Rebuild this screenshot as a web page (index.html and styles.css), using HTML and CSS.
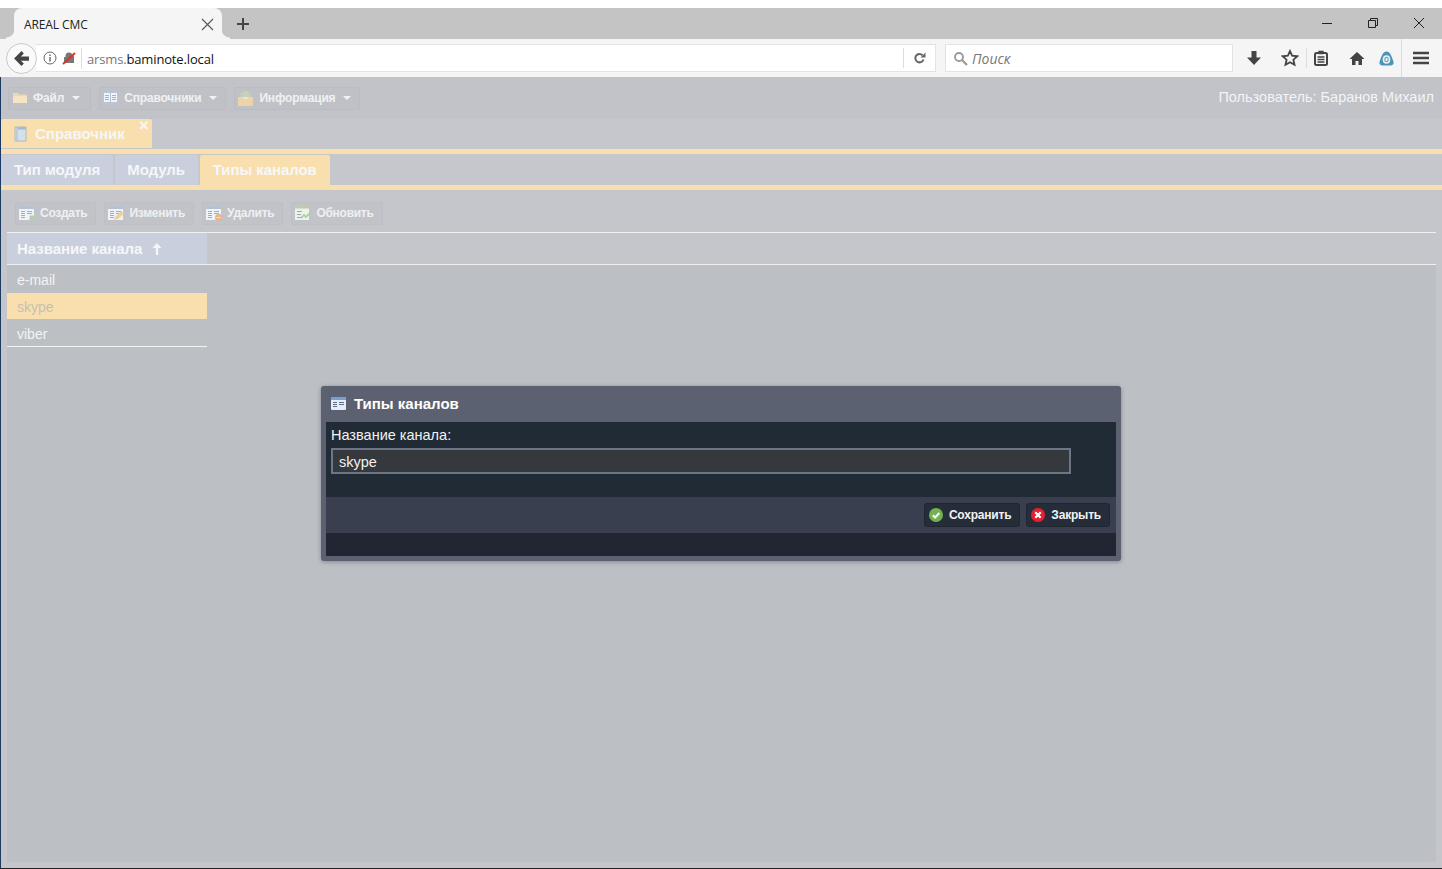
FILE: index.html
```html
<!DOCTYPE html>
<html lang="ru">
<head>
    <meta charset="UTF-8">
    <title>AREAL CMC</title>
    <link rel="stylesheet" href="styles.css">
</head>
<body>
    <div class="window">
        <div class="tabstrip">
            <div class="browser-tab">
                <span class="browser-tab-title">AREAL CMC</span>
                <svg class="tab-close" width="13" height="13" viewBox="0 0 13 13"><path d="M1 1l11 11M12 1L1 12" stroke="#555" stroke-width="1.1" fill="none"/></svg>
            </div>
            <svg class="tab-new" width="14" height="14" viewBox="0 0 14 14"><path d="M7 1v12M1 7h12" stroke="#444" stroke-width="2" fill="none"/></svg>
            <div class="win-controls">
                <svg width="12" height="12" viewBox="0 0 12 12"><path d="M1 6.500h10" stroke="#222" stroke-width="1"/></svg>
                <svg width="12" height="12" viewBox="0 0 12 12"><path d="M3.500 3.500V1.500h7v7h-2M1.500 3.500h7v7h-7z" stroke="#222" stroke-width="1" fill="none"/></svg>
                <svg width="12" height="12" viewBox="0 0 12 12"><path d="M1 1l10 10M11 1L1 11" stroke="#222" stroke-width="1" fill="none"/></svg>
            </div>
        </div>
        <div class="navbar">
            <div class="back-btn">
                <svg width="17" height="17" viewBox="0 0 16 16"><path d="M8 1L1 8l7 7 2.200-2.200L7.400 10H15V6H7.400l2.800-2.800z" fill="#444"/></svg>
            </div>
            <div class="urlbar">
                <svg class="url-icon" width="14" height="14" viewBox="0 0 14 14"><circle cx="7" cy="7" r="6" stroke="#666" fill="none"/><path d="M7 6v4.500M7 3.400v1.600" stroke="#666" stroke-width="1.400"/></svg>
                <svg class="url-icon" width="14" height="14" viewBox="0 0 14 14"><path d="M2 12V6h1.500V4.500a3.500 3.500 0 0 1 6 -2L12 5v7z" fill="#777"/><path d="M1 13L13 2" stroke="#d9352b" stroke-width="2"/></svg>
                <span class="url-text"><span class="url-dim">arsms.</span>baminote.local</span>
                <span class="url-reload">
                    <svg width="13" height="13" viewBox="0 0 13 13"><path d="M10.500 7.500A4.200 4.200 0 1 1 9.500 3.200" stroke="#666" stroke-width="2" fill="none"/><path d="M7.500 5.500h5v-5z" fill="#666"/></svg>
                </span>
            </div>
            <div class="searchbar">
                <svg width="15" height="15" viewBox="0 0 15 15"><circle cx="6" cy="6" r="4" stroke="#999" stroke-width="1.800" fill="none"/><path d="M9 9l5 5" stroke="#999" stroke-width="2.200"/></svg>
                <span>Поиск</span>
            </div>
            <div class="nav-icons">
                <svg class="ico-down" width="16" height="16" viewBox="0 0 16 16"><path d="M5.500 1h5v6.500H15L8 15 1 7.500h4.500z" fill="#444"/></svg>
                <svg class="ico-star" width="18" height="18" viewBox="0 0 18 18"><path d="M9 2l2.100 4.700 5.100.6-3.800 3.400 1.100 5L9 13.200l-4.500 2.500 1.100-5L1.800 7.300l5.100-.6z" fill="none" stroke="#444" stroke-width="1.800"/></svg>
                <i class="nav-sep"></i>
                <svg class="ico-clip" width="14" height="16" viewBox="0 0 14 16"><rect x="1" y="3" width="12" height="12" rx="1.500" fill="none" stroke="#444" stroke-width="2"/><path d="M5 1.500h4v2H5zM3.500 7h7M3.500 9.500h7M3.500 12h7" stroke="#444" stroke-width="1.300" fill="none"/></svg>
                <svg class="ico-home" width="16" height="15" viewBox="0 0 16 15"><path d="M8 1L0.500 8H3v6h3.500V10h3v4H13V8h2.500z" fill="#444"/></svg>
                <svg class="ico-ext" width="17" height="17" viewBox="0 0 17 17"><path d="M8.500 1.500C5 1.500 3.500 6 1.500 12c-.6 2 1 3.500 3 3.500h8c2 0 3.600-1.500 3-3.500C13.500 6 12 1.500 8.500 1.500z" fill="#4c93b8"/><ellipse cx="8.500" cy="9.500" rx="3.800" ry="4.300" fill="#e9f2f6"/><ellipse cx="8.500" cy="9.500" rx="2.200" ry="2.800" fill="#6a9fba"/><ellipse cx="8.500" cy="9.500" rx="1.200" ry="1.700" fill="#e9f2f6"/></svg>
                <i class="nav-sep nav-sep-end"></i>
                <svg class="ico-menu" width="16" height="14" viewBox="0 0 16 14"><path d="M0 2h16M0 7h16M0 12h16" stroke="#444" stroke-width="2.500"/></svg>
            </div>
        </div>

        <div class="app">
            <div class="menubar">
                <div class="menu-btn">
                    <svg class="ico-folder" width="14" height="12" viewBox="0 0 14 12"><path d="M0 1h5l1 1.500h8V11H0z" fill="#ead9b6"/><path d="M0 4h14v7H0z" fill="#f4e4c4"/></svg>
                    <span>Файл</span><i class="caret"></i>
                </div>
                <div class="menu-btn">
                    <svg width="15" height="12" viewBox="0 0 15 12"><path d="M0 0h15v12H0z" fill="#b4c6dc"/><path d="M1 1h6v9H1zM8 1h6v9H8z" fill="#f0f3f7"/><path d="M2 3.500h4M2 5.500h4M2 7.500h4M9 3.500h4M9 5.500h4M9 7.500h4" stroke="#a3b4c9"/></svg>
                    <span>Справочники</span><i class="caret"></i>
                </div>
                <div class="menu-btn">
                    <svg width="15" height="15" viewBox="0 0 15 15"><path d="M4.500 0h6v2h2v5h-10V2h2z" fill="#c3d2b8"/><path d="M0 6h15v9H0z" fill="#ecd3a8"/><path d="M5.500 6h4v2h-4z" fill="#f4e6cc"/></svg>
                    <span>Информация</span><i class="caret"></i>
                </div>
                <div class="user-name">Пользователь: Баранов Михаил</div>
            </div>

            <div class="module-tabs">
                <div class="module-tab">
                    <svg width="13" height="16" viewBox="0 0 13 16"><path d="M1 1h11v14H1z" fill="#d5e0ea" stroke="#a9bacb"/><path d="M3 1v14" stroke="#a9bacb"/><path d="M4 1h8v2.500H4z" fill="#a9bacb"/></svg>
                    <span>Справочник</span>
                    <span class="module-close">×</span>
                </div>
            </div>
            <div class="yellow-line"></div>
            <div class="sub-tabs">
                <div class="sub-tab">Тип модуля</div>
                <div class="sub-tab">Модуль</div>
                <div class="sub-tab active">Типы каналов</div>
            </div>
            <div class="yellow-line"></div>

            <div class="toolbar">
                <div class="tool-btn">
                    <svg width="16" height="15" viewBox="0 0 16 15"><use href="#grid-ico"/><path d="M10.500 9.500h5v5h-5z" fill="#c2c4ca"/><path d="M13 10v4M11 12h4" stroke="#a9d59a" stroke-width="2"/></svg>
                    <span>Создать</span>
                </div>
                <div class="tool-btn">
                    <svg width="16" height="15" viewBox="0 0 16 15"><use href="#grid-ico"/><path d="M6 14l1.500-3.500L13.500 5 16 7.500 10 13z" fill="#ebd29a"/></svg>
                    <span>Изменить</span>
                </div>
                <div class="tool-btn">
                    <svg width="16" height="15" viewBox="0 0 16 15"><use href="#grid-ico"/><circle cx="12.500" cy="11.500" r="3.500" fill="#eab48a"/><path d="M10.500 11.500h4" stroke="#f6e6d8"/></svg>
                    <span>Удалить</span>
                </div>
                <div class="tool-btn">
                    <svg width="16" height="15" viewBox="0 0 16 15"><path d="M0 0h14v14H0z" fill="#eef1ec"/><path d="M0 0h14v2.500H0z" fill="#b9cdb0"/><path d="M2 5.500h5M2 8.500h4M2 11.500h4" stroke="#9aa6b6"/><path d="M6 12l3-3 2 2 4-4" stroke="#a9d59a" stroke-width="1.800" fill="none"/></svg>
                    <span>Обновить</span>
                </div>
            </div>

            <div class="grid-area">
                <div class="grid-head">
                    <div class="grid-head-cell">
                        <span>Название канала</span>
                        <svg width="10" height="12" viewBox="0 0 10 12"><path d="M5 0L9.500 5H6.200v7H3.800V5H.5z" fill="#f4f5f7"/></svg>
                    </div>
                </div>
                <div class="grid-rows">
                    <div class="grid-row">e-mail</div>
                    <div class="grid-row selected">skype</div>
                    <div class="grid-row">viber</div>
                </div>
            </div>

            <div class="dialog">
                <div class="dialog-title">
                    <svg width="15" height="13" viewBox="0 0 15 13"><rect width="15" height="13" rx="1" fill="#e6edf6"/><path d="M0 0h15v3H0z" fill="#7c9dd0"/><path d="M2 5.500h4M2 7.500h4M2 9.500h4M8 5.500h5M8 7.500h5" stroke="#5a6f90"/></svg>
                    <span>Типы каналов</span>
                </div>
                <div class="dialog-body">
                    <label class="dialog-label">Название канала:</label>
                    <div class="dialog-input">skype</div>
                </div>
                <div class="dialog-actions">
                    <div class="dialog-btn">
                        <svg width="14" height="14" viewBox="0 0 14 14"><circle cx="7" cy="7" r="7" fill="#6fb44f"/><path d="M3.800 7.200l2.300 2.300 4.200-4.500" stroke="#fff" stroke-width="2" fill="none"/></svg>
                        <span>Сохранить</span>
                    </div>
                    <div class="dialog-btn">
                        <svg width="14" height="14" viewBox="0 0 14 14"><circle cx="7" cy="7" r="7" fill="#e5202e"/><path d="M4.300 4.300l5.400 5.400M9.700 4.300l-5.400 5.400" stroke="#fff" stroke-width="2.200" fill="none"/></svg>
                        <span>Закрыть</span>
                    </div>
                </div>
                <div class="dialog-foot"></div>
            </div>
        </div>
    </div>

    <svg class="defs" width="0" height="0">
        <symbol id="grid-ico" viewBox="0 0 16 15" width="16" height="15">
            <path d="M0 0h15v14H0z" fill="#eff2f6"/>
            <path d="M0 0h15v3H0z" fill="#b4c2d4"/>
            <path d="M2 5.500h4M2 7.500h4M2 9.500h4M2 11.500h4M8 5.500h5M8 7.500h5" stroke="#a4aebb"/>
        </symbol>
    </svg>
</body>
</html>
```

FILE: styles.css
```css
html, body{
    margin: 0;
    height: 100%;
    overflow: hidden;
    background: #fff;
}
body{
    font-family: "Liberation Sans", sans-serif;
}
svg{
    flex: none;
    display: block;
}
.defs{
    position: absolute;
}
.window{
    height: 869px;
    box-sizing: border-box;
    padding-top: 8px;
    display: flex;
    flex-direction: column;
}

/* browser chrome */
.tabstrip{
    height: 31px;
    background: #c4c4c4;
    display: flex;
    align-items: center;
    flex: none;
}
.browser-tab{
    width: 208px;
    height: 31px;
    margin-left: 14px;
    padding: 2px 8px 0 10px;
    box-sizing: border-box;
    background: #f5f5f5;
    border-radius: 8px 8px 0 0;
    display: flex;
    align-items: center;
    justify-content: space-between;
    font-family: "Open Sans", sans-serif;
    font-size: 12px;
    letter-spacing: -.1px;
    color: #222;
    position: relative;
}
.browser-tab::before,
.browser-tab::after{
    content: "";
    position: absolute;
    bottom: 0;
    width: 8px;
    height: 10px;
}
.browser-tab::before{
    left: -8px;
    background: radial-gradient(circle at 0 0, #c4c4c4 8px, #f5f5f5 9px);
}
.browser-tab::after{
    right: -8px;
    background: radial-gradient(circle at 100% 0, #c4c4c4 8px, #f5f5f5 9px);
}
.tab-new{
    margin-left: 14px;
}
.win-controls{
    margin-left: auto;
    padding-right: 17px;
    display: flex;
    gap: 34px;
    margin-top: -2px;
}
.navbar{
    height: 38px;
    background: #f5f5f5;
    display: flex;
    align-items: center;
    flex: none;
    padding-left: 6px;
}
.back-btn{
    width: 31px;
    height: 31px;
    box-sizing: border-box;
    border: 1px solid #c8c8c8;
    border-radius: 50%;
    background: #fafafa;
    display: flex;
    align-items: center;
    justify-content: center;
    margin-right: -1px;
    position: relative;
}
.urlbar{
    width: 900px;
    height: 28px;
    box-sizing: border-box;
    background: #fff;
    border: 1px solid #e3e3e3;
    border-left: 0;
    display: flex;
    align-items: center;
    padding-left: 7px;
    gap: 5px;
    font-family: "Open Sans", sans-serif;
    font-size: 13px;
    letter-spacing: -.15px;
    color: #111;
}
.url-text{
    border-left: 1px solid #ddd;
    padding-left: 5px;
    line-height: 20px;
    padding-top: 1px;
}
.url-dim{
    color: #777;
}
.url-reload{
    margin-left: auto;
    width: 31px;
    height: 20px;
    border-left: 1px solid #ddd;
    display: flex;
    align-items: center;
    justify-content: center;
}
.searchbar{
    width: 288px;
    height: 28px;
    margin-left: 9px;
    box-sizing: border-box;
    background: #fff;
    border: 1px solid #e3e3e3;
    display: flex;
    align-items: center;
    gap: 4px;
    padding-left: 7px;
    font-family: "Open Sans", sans-serif;
    font-style: italic;
    font-size: 14px;
    color: #777;
}
.nav-icons{
    display: flex;
    align-items: center;
    flex: 1;
    padding-left: 13px;
}
.nav-sep{
    width: 1px;
    height: 20px;
    margin-left: 7px;
    background: #dcdcdc;
}
.nav-sep-end{
    height: 38px;
    margin-left: 6px;
}
.ico-star{
    margin-left: 19px;
}
.ico-clip{
    margin-left: 7px;
}
.ico-home{
    margin-left: 21px;
}
.ico-ext{
    margin-left: 13px;
}
.ico-menu{
    margin-left: 11px;
}

/* app behind the overlay */
.app{
    flex: 1;
    position: relative;
    background: #c4c6cc;
    border-left: 1px solid #1d3a63;
    border-bottom: 1px solid #222;
    display: flex;
    flex-direction: column;
    min-height: 0;
}
.menubar{
    height: 42px;
    background: #c1c3c9;
    display: flex;
    align-items: center;
    gap: 8px;
    padding-left: 7px;
    flex: none;
}
.menu-btn{
    height: 23px;
    box-sizing: border-box;
    padding: 0 8px 0 3px;
    background: #bfc1c7;
    border: 1px solid #babcc2;
    border-radius: 2px;
    display: flex;
    align-items: center;
    gap: 6px;
    font-size: 12px;
    font-weight: bold;
    letter-spacing: -.18px;
    color: #f0f1f3;
}
.menu-btn:first-child{
    padding-right: 10px;
}
.ico-folder{
    margin-left: 1px;
}
.caret{
    width: 0;
    height: 0;
    margin-left: 2px;
    border-left: 4px solid transparent;
    border-right: 4px solid transparent;
    border-top: 4px solid #f0f1f3;
}
.user-name{
    margin-left: auto;
    padding: 0 8px 2px 0;
    font-size: 14.5px;
    color: #f3f4f6;
}
.module-tabs{
    height: 30px;
    background: #c5c7cd;
    display: flex;
    flex: none;
}
.module-tab{
    width: 151px;
    height: 29px;
    padding-left: 13px;
    box-sizing: border-box;
    background: #fadfae;
    border-radius: 2px 2px 0 0;
    display: flex;
    align-items: center;
    gap: 8px;
    font-size: 15px;
    font-weight: bold;
    color: #f5f6f8;
    position: relative;
}
.module-close{
    position: absolute;
    top: -1px;
    right: 3px;
    font-size: 17px;
    line-height: 15px;
}
.yellow-line{
    height: 5px;
    background: #fadfae;
    flex: none;
}
.sub-tabs{
    height: 31px;
    display: flex;
    align-items: flex-end;
    gap: 2px;
    background: #c5c7cd;
    flex: none;
}
.sub-tab{
    height: 30px;
    padding: 0 13px 0 12px;
    line-height: 29px;
    background: #c9cfdc;
    border-radius: 2px 2px 0 0;
    font-size: 15px;
    font-weight: bold;
    letter-spacing: -.08px;
    color: #f6f7f9;
}
.sub-tab:first-child{
    padding-left: 13px;
}
.sub-tab.active{
    padding-left: 13px;
    background: #fadfae;
}
.toolbar{
    height: 43px;
    margin: 0 6px;
    padding: 4px 0 0 8px;
    border-bottom: 1px solid #eef0f2;
    display: flex;
    align-items: center;
    gap: 8px;
    flex: none;
    box-sizing: border-box;
}
.tool-btn{
    height: 23px;
    box-sizing: border-box;
    padding: 0 8px 0 3px;
    background: #c1c3c9;
    border: 1px solid #bdbfc5;
    border-radius: 2px;
    display: flex;
    align-items: center;
    gap: 5px;
    font-size: 12px;
    font-weight: bold;
    letter-spacing: -.27px;
    color: #eef0f2;
}
.grid-area{
    flex: 1;
    margin: 0 6px 6px;
    background: #bcbfc4;
}
.grid-head{
    height: 32px;
    box-sizing: border-box;
    border-bottom: 1px solid #eef0f2;
    background: #c4c6cc;
}
.grid-head-cell{
    width: 200px;
    height: 31px;
    padding-left: 10px;
    box-sizing: border-box;
    background: #c9cfdc;
    display: flex;
    align-items: center;
    gap: 10px;
    font-size: 15px;
    letter-spacing: -.05px;
    font-weight: bold;
    color: #f6f7f9;
}
.grid-rows{
    width: 200px;
    border-bottom: 1px solid #f2f3f5;
}
.grid-row{
    height: 28px;
    padding-left: 10px;
    line-height: 31px;
    font-size: 14px;
    color: #f3f4f6;
}
.grid-row.selected{
    line-height: 28px;
    height: 26px;
    background: #fadfae;
    color: #c4c0b4;
}
.grid-row:last-child{
    height: 27px;
    line-height: 31px;
}

/* modal */
.dialog{
    position: absolute;
    left: 320px;
    top: 309px;
    width: 800px;
    height: 175px;
    box-sizing: border-box;
    padding: 0 5px 5px;
    background: #5b6170;
    border-radius: 3px;
    box-shadow: 0 1px 4px rgba(60, 64, 72, .45);
    display: flex;
    flex-direction: column;
}
.dialog-title{
    height: 36px;
    flex: none;
    box-sizing: border-box;
    padding-bottom: 2px;
    margin-left: 5px;
    display: flex;
    align-items: center;
    gap: 8px;
    font-size: 15px;
    font-weight: bold;
    color: #fff;
}
.dialog-body{
    height: 75px;
    flex: none;
    box-sizing: border-box;
    padding: 5px 0 0 5px;
    background: #212b35;
}
.dialog-label{
    display: block;
    font-size: 14.5px;
    line-height: 16px;
    color: #f2f2f2;
}
.dialog-input{
    width: 740px;
    height: 26px;
    margin-top: 5px;
    box-sizing: border-box;
    padding-left: 6px;
    border: 2px solid #6d7686;
    background: #35383c;
    font-size: 14.5px;
    line-height: 24px;
    color: #f2f2f2;
}
.dialog-actions{
    height: 36px;
    flex: none;
    background: #3a3f4f;
    display: flex;
    align-items: center;
    justify-content: flex-end;
    gap: 6px;
    padding-right: 6px;
}
.dialog-btn{
    height: 24px;
    box-sizing: border-box;
    padding: 0 8px 0 4px;
    background: #262d3a;
    border: 1px solid #20262f;
    border-radius: 3px;
    display: flex;
    align-items: center;
    gap: 6px;
    font-size: 12px;
    font-weight: bold;
    letter-spacing: -.2px;
    color: #f2f2f2;
}
.dialog-foot{
    flex: 1;
    background: #212632;
}
```
